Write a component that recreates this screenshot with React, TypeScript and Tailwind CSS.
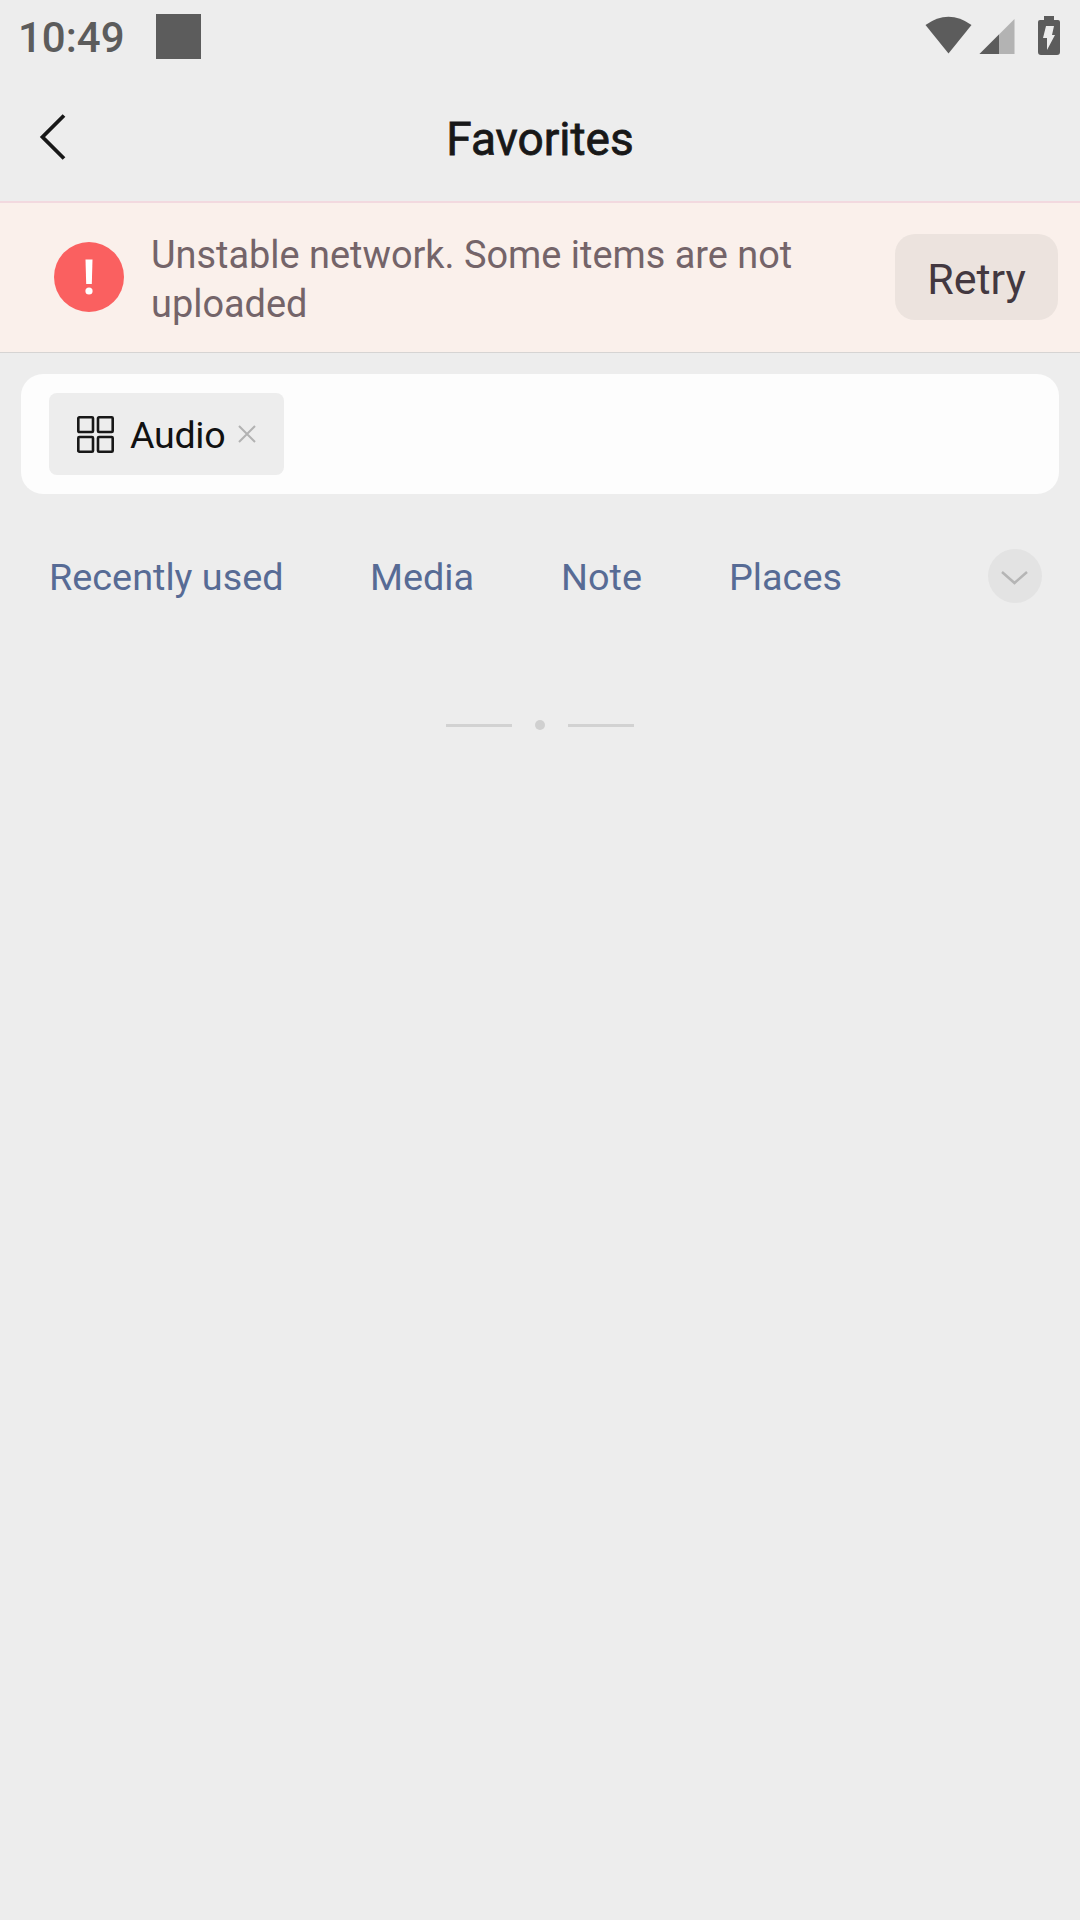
const tags = [
  { label: "Recently used", width: "w-[321px]" },
  { label: "Media", width: "w-[191px]" },
  { label: "Note", width: "w-[168px]" },
  { label: "Places", width: "" },
];

function StatusBar() {
  return (
    <div className="flex h-[72px] items-center pl-[18px] pr-[19px] text-[#5c5c5c]">
      <span className="w-[138px] whitespace-nowrap pt-[3px] text-[42px] leading-[50px] font-medium">10:49</span>
      <span className="size-[45px] bg-[#5c5c5c]" />
      <svg className="ml-auto h-[40px] w-[136px]" viewBox="925 16 136 40" fill="currentColor">
        <path d="M925.500 25Q948.500 8.500 971.500 25L948.500 53.500Z" />
        <path d="M1014.500 19V54H979.500Z" opacity=".4" />
        <path d="M999 34.500V54H979.500Z" />
        <path d="M1044 16h10v4h4q2 0 2 2v30q0 3-3 3h-16q-3 0-3-3V22q0-2 2-2h4Z" />
        <path d="M1046 26h8l-2 9h3l-8 15v-12h-4Z" fill="#ededed" />
      </svg>
    </div>
  );
}

function Header() {
  return (
    <header className="grid h-[129px] grid-cols-[80px_1fr_80px] items-center">
      <button className="pl-[38px]" aria-label="Back">
        <svg className="h-[50px] w-[30px]" viewBox="38 112 30 50" fill="none" stroke="#181818" strokeWidth="3.8">
          <path d="M64 115.500L42.500 137L64 158.500" />
        </svg>
      </button>
      <h1 className="pt-[5px] text-center text-[46px] leading-[54px] font-normal text-[#181818] [-webkit-text-stroke:0.8px_#181818]">Favorites</h1>
    </header>
  );
}

function Banner() {
  return (
    <section className="flex h-[152px] items-center border-t-2 border-b border-t-[#f2d9df] border-b-[#d6d4d3] bg-[#faf0eb] pb-[2px] pl-[54px] pr-[22px]">
      <svg className="size-[70px]" viewBox="0 0 70 70">
        <circle cx="35" cy="35" r="35" fill="#fa6060" />
        <path d="M31.500 17.500h7l-.7 24.500h-5.600Z" fill="white" />
        <circle cx="35" cy="49" r="3.600" fill="white" />
      </svg>
      <p className="ml-[27px] mt-[6px] w-[660px] text-[37.9px] leading-[49px] text-[#746469]">
        Unstable network. Some items are not uploaded
      </p>
      <button className="ml-auto h-[86px] w-[163px] rounded-[20px] bg-[#ece3de] pt-[4px] text-[43px] leading-[50px] text-[#433840]">
        Retry
      </button>
    </section>
  );
}

function SearchBox() {
  return (
    <div className="mx-[21px] mt-[21px] flex h-[120px] items-center rounded-[22px] bg-[#fdfdfd] pl-[28px]">
      <div className="flex h-[82px] w-[235px] items-center rounded-[8px] bg-[#ededed] pl-[28px]">
        <svg className="size-[37px]" viewBox="0 0 37 37" fill="none" stroke="#181818" strokeWidth="2.600">
          <rect x="1.300" y="1.300" width="14.700" height="14.700" rx="1" />
          <rect x="21" y="1.300" width="14.700" height="14.700" rx="1" />
          <rect x="1.300" y="21" width="14.700" height="14.700" rx="1" />
          <rect x="21" y="21" width="14.700" height="14.700" rx="1" />
        </svg>
        <span className="ml-[16px] w-[108px] pt-[2px] text-[37.6px] tracking-[-0.3px] leading-[46px] text-[#111111]">Audio</span>
        <svg className="size-[18px]" viewBox="0 0 18 18" fill="none" stroke="#b2b2b2" strokeWidth="2">
          <path d="M1 1L17 17M17 1L1 17" />
        </svg>
      </div>
    </div>
  );
}

function Tags() {
  return (
    <nav className="mt-[42px] flex h-[80px] items-center pl-[49px] pr-[38px] text-[37.8px] leading-[46px] text-[#576b95]">
      {tags.map((tag) => (
        <span key={tag.label} className={`shrink-0 pt-[2px] ${tag.width}`}>{tag.label}</span>
      ))}
      <svg className="ml-auto size-[54px]" viewBox="0 0 54 54">
        <circle cx="27" cy="27" r="27" fill="#e3e3e3" />
        <path d="M14 23L26.500 34L39 23" fill="none" stroke="#b5b5b5" strokeWidth="2.500" />
      </svg>
    </nav>
  );
}

export default function App() {
  return (
    <main className="h-[1920px] w-[1080px] overflow-hidden bg-[#ededed] font-['Roboto',sans-serif]">
      <StatusBar />
      <Header />
      <Banner />
      <SearchBox />
      <Tags />
      <div className="mt-[104px] flex h-[10px] items-center justify-center gap-[23px]">
        <span className="h-[3px] w-[66px] bg-[#d2d2d2]" />
        <span className="size-[10px] rounded-full bg-[#d0d0d0]" />
        <span className="h-[3px] w-[66px] bg-[#d2d2d2]" />
      </div>
    </main>
  );
}
